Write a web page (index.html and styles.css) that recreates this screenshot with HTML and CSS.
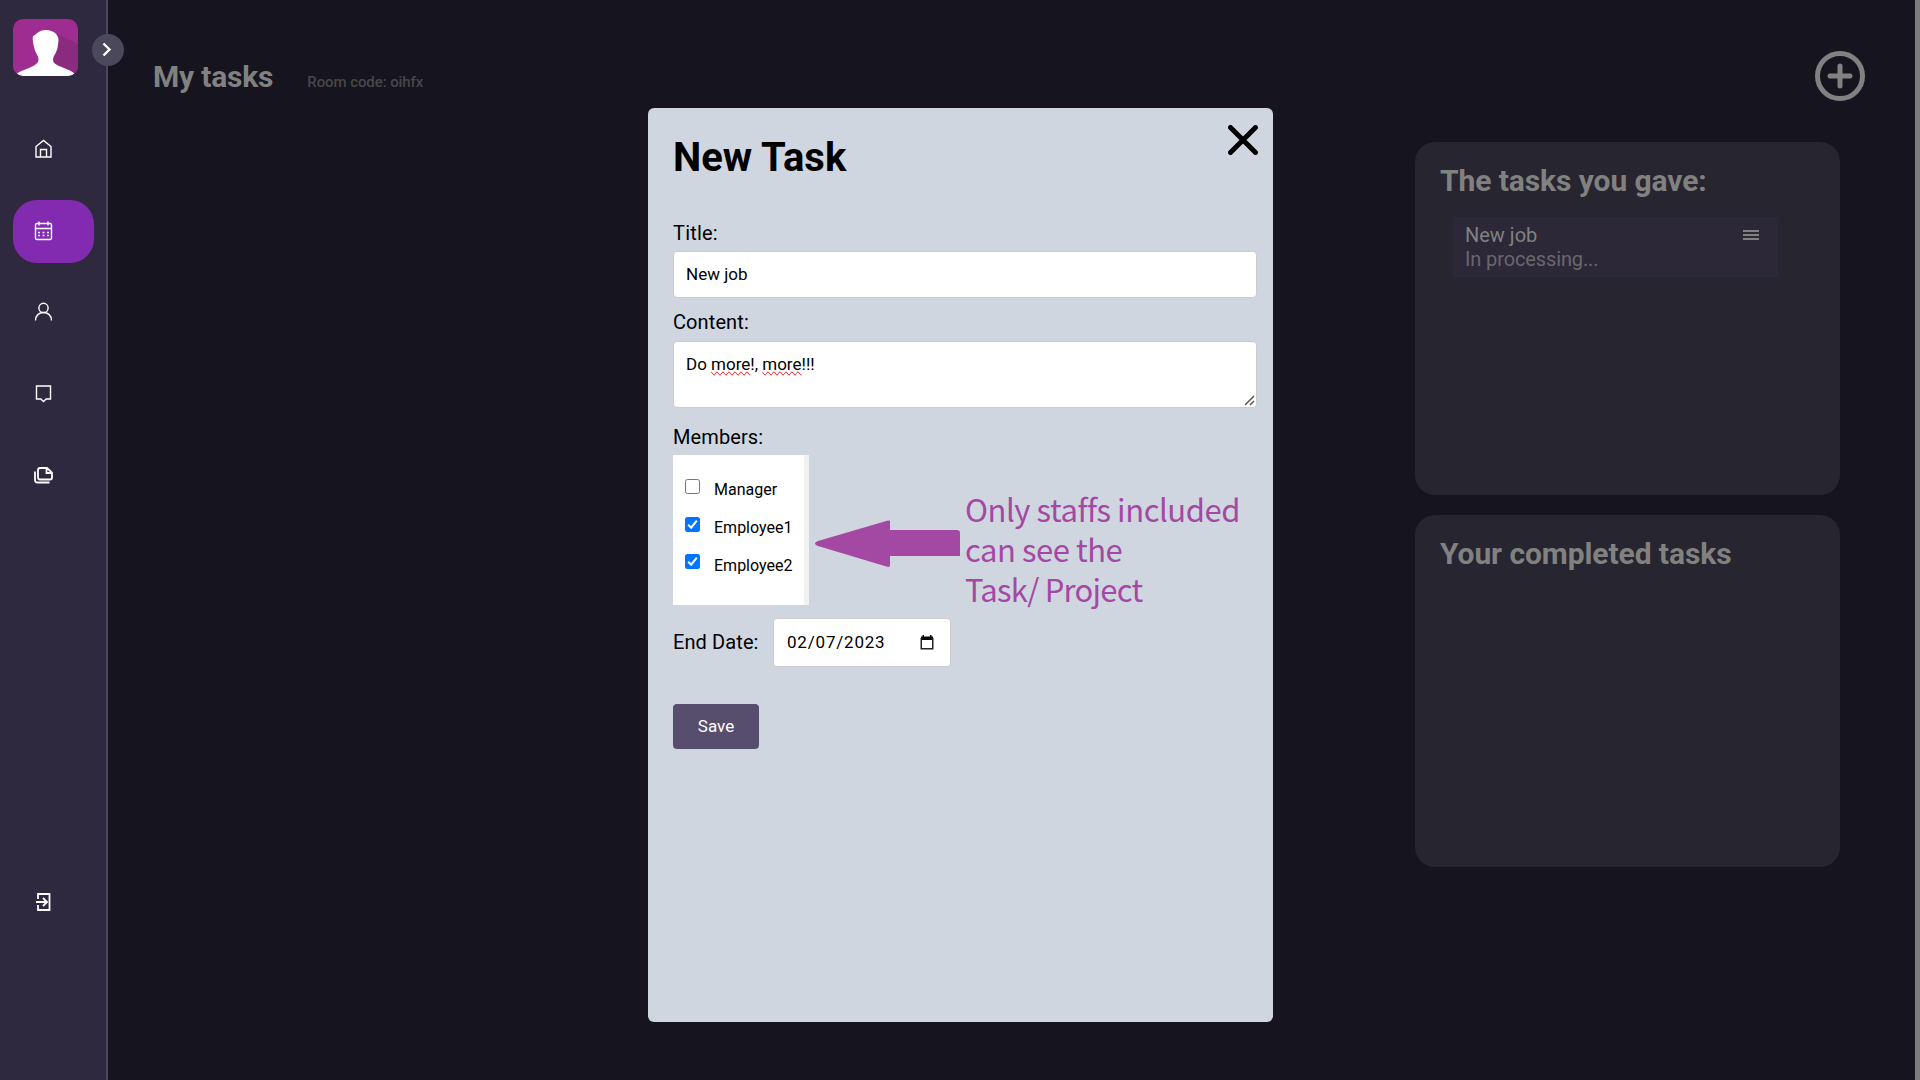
FILE: index.html
```html
<!DOCTYPE html>
<html lang="en">
<head>
<meta charset="utf-8">
<title>My tasks</title>
<link rel="stylesheet" href="styles.css">
</head>
<body>
<div class="app">
  <aside class="sidebar">
    <svg class="avatar" viewBox="0 0 65 57"><path fill="#9e2c91" d="M0 0h65v57H0z"/><path fill="#8b2b80" d="M44 15l21 10v32H40z"/><path fill="#fff" d="M20 17C23 16 25 11 33 11C41 11 46 16 45.500 22L44.500 29C43 35 40 37 40 41C40 47 53 48 61.500 54.500Q60 57 57 57H9Q6 57 4 54.500C13 49 25.500 47 25.500 41C26 37 22 34 21 28Q19 20 20 17z"/></svg>
    <nav class="nav">
      <a class="nav-item home"><svg viewBox="0 0 20 20"><path d="M2.500 7.500L10 1.500l7.500 6V18h-15zM7 18v-7.500h6V18"/></svg></a>
      <a class="nav-item active"><svg viewBox="0 0 20 20"><rect x="2" y="2.500" width="16" height="16" rx="1.500"/><path d="M2 7.500h16M5.500 0.500v4M14.500 0.500v4"/><path d="M4.500 11.500h2M9 11.500h2M13.500 11.500h2M4.500 14.500h2M9 14.500h2M13.500 14.500h2"/></svg></a>
      <a class="nav-item person"><svg viewBox="0 0 20 20"><circle cx="10" cy="5.900" r="4.600"/><path d="M2 18.500c0-5 3.500-8 8-8s8 3 8 8"/></svg></a>
      <a class="nav-item"><svg viewBox="0 0 20 20"><path d="M3 2h14v13h-4.300L10 17.500 7.300 15H3z"/></svg></a>
      <a class="nav-item files"><svg class="bold" viewBox="0 0 20 20"><path d="M6.500 3h7l5 4.700v4.800q0 2-2 2h-10q-2 0-2-2V5q0-2 2-2zM13 3.500V8h5"/><path d="M1.500 6.500v8.500q0 2.500 2.500 2.500h12"/></svg></a>
      <a class="nav-item logout"><svg class="bold" viewBox="0 0 20 20"><path d="M4.500 7V2h11.500v16H4.500v-5M2.500 10h11M9.500 6l4 4-4 4"/></svg></a>
    </nav>
    <button class="toggle"><svg viewBox="0 0 32 32"><path d="M11.500 9.500l6 6-6 6"/></svg></button>
  </aside>
  <main class="main">
    <header class="header">
      <h1 class="page-title">My tasks</h1>
      <span class="room">Room code: oihfx</span>
      <svg class="add" viewBox="0 0 50 50"><circle cx="25" cy="25" r="22.500"/><path d="M15 25h20M25 15v20"/></svg>
    </header>
    <div class="cards">
      <section class="card">
        <h2>The tasks you gave:</h2>
        <div class="job">
          <div><p class="job-name">New job</p><p class="job-state">In processing...</p></div>
          <svg class="menu" viewBox="0 0 16 10"><path d="M0 1h16M0 5h16M0 9h16"/></svg>
        </div>
      </section>
      <section class="card done"><h2>Your completed tasks</h2></section>
    </div>
  </main>
  <div class="scrollbar"></div>
</div>
<div class="modal">
  <svg class="close" viewBox="0 0 30 30"><path d="M2.500 2.500l25 25M27.500 2.500l-25 25"/></svg>
  <h2 class="modal-title">New Task</h2>
  <p class="label">Title:</p>
  <div class="field title-field">New job</div>
  <p class="label content-label">Content:</p>
  <div class="field area">Do <span class="typo">more</span>!, <span class="typo">more</span>!!!<svg class="grip" viewBox="0 0 11 11"><path d="M1 10L10 1M6 10l4-4"/></svg></div>
  <p class="label members-label">Members:</p>
  <div class="members">
    <div class="member"><span class="box"></span><span>Manager</span></div>
    <div class="member"><span class="box on"><svg viewBox="0 0 15 15"><path d="M3.200 7.700l3 3 5.600-7"/></svg></span><span>Employee1</span></div>
    <div class="member"><span class="box on"><svg viewBox="0 0 15 15"><path d="M3.200 7.700l3 3 5.600-7"/></svg></span><span>Employee2</span></div>
  </div>
  <div class="date-row">
    <span class="label date-label">End Date:</span>
    <div class="field date"><span>02/07/2023</span><svg viewBox="0 0 14 15"><path fill="#000" d="M1 1.500h1.500V0H4v1.500h6V0h1.500v1.500H13V5H1z"/><path fill="none" stroke="#222" stroke-width="1.500" d="M1.250 3v10.750h11.500V3"/></svg></div>
  </div>
  <button class="save">Save</button>
  <svg class="arrow" viewBox="0 0 145 48"><path d="M0 23.500Q0 22 3 21L73 0.500Q75 0 75 1.500V10h67q3 0 3 3v23H75v9q0 2.500-2 2L3 26Q0 25 0 23.500z"/></svg>
  <div class="note"><p>Only staffs included</p><p>can see the</p><p class="note-last">Task/ Project</p></div>
</div>
</body>
</html>
```
FILE: styles.css
```css
* { box-sizing: border-box; margin: 0; padding: 0; }
body { width: 1920px; height: 1080px; overflow: hidden; background: #16141e; font-family: Roboto, "Liberation Sans", sans-serif; color: #000; }
svg { display: block; }
button { border: 0; font: inherit; }
.app { display: flex; height: 1080px; }
.sidebar { position: relative; width: 108px; border-right: 2px solid #4b485a; background: #2e293f; padding: 19px 12px 0 13px; }
.avatar { width: 65px; height: 57px; border-radius: 10px; overflow: hidden; }
.nav { display: flex; flex-direction: column; gap: 18.500px; padding-top: 42px; }
.nav-item { display: flex; align-items: center; height: 63px; padding-left: 20px; border-radius: 24px; }
.nav-item svg { width: 21px; height: 20px; fill: none; stroke: #fff; stroke-width: 1.400; }
.nav-item svg.bold { stroke-width: 1.800; }
.home, .person, .files { padding-bottom: 2px; }
.active { background: #822bb1; }
.logout { margin-top: 345px; }
.toggle { position: absolute; left: 92px; top: 34px; width: 32px; height: 32px; border-radius: 50%; background: #4b485b; }
.toggle svg { width: 32px; fill: none; stroke: #fff; stroke-width: 2.400; }
.main { flex: 1; padding: 51px 75px 0 45px; }
.header { display: flex; height: 50px; align-items: baseline; }
.page-title { font-size: 30px; line-height: 52px; letter-spacing: -0.200px; color: #818181; }
.room { margin-left: 34px; font-size: 15px; font-weight: 500; letter-spacing: -0.080px; color: #48474b; }
.add { width: 50px; height: 50px; margin: 0 -25px 0 auto; align-self: flex-start; fill: none; stroke: #818181; stroke-width: 5; stroke-linecap: round; }
.cards { display: flex; flex-direction: column; align-items: flex-end; gap: 20px; padding-top: 41px; }
.card { width: 425px; height: 353px; border-radius: 20px; background: #27252f; padding: 21px 62px 0 25px; color: #818181; }
.done { height: 352px; }
.card h2 { font-size: 30px; line-height: 36px; letter-spacing: -0.080px; white-space: nowrap; }
.job { display: flex; justify-content: space-between; width: 325px; height: 60px; margin: 18px 0 0 13px; padding: 6px 19px 0 12px; background: #2c2838; font-size: 20px; line-height: 24px; }
.job-state { color: #69676d; letter-spacing: -0.120px; }
.menu { width: 16px; height: 10px; margin-top: 7px; stroke: #818181; stroke-width: 2; }
.scrollbar { width: 5px; background: #7d7d7d; }
.modal { position: absolute; left: 648px; top: 108px; width: 625px; height: 914px; border-radius: 6px; background: #d0d6e0; padding: 26px 16px 0 25px; }
.close { position: absolute; right: 15px; top: 17px; width: 30px; height: 30px; stroke: #000; stroke-width: 5; stroke-linecap: round; }
.modal-title { font-size: 40px; line-height: 48px; }
.label { font-size: 20px; line-height: 24px; }
.modal-title + .label { margin-top: 39px; letter-spacing: 0.200px; }
.field { border: 1px solid #ccc; border-radius: 4px; background: #fff; font-size: 17px; line-height: 20px; }
.title-field { height: 47px; margin-top: 6px; padding: 12px 12px; }
.content-label { margin-top: 12px; letter-spacing: 0.100px; }
.area { position: relative; height: 67px; margin-top: 7px; padding: 12px 12px; }
.typo { text-decoration: underline wavy #f22 1px; text-decoration-line: spelling-error; }
.grip { position: absolute; right: 1px; bottom: 1px; width: 11px; height: 11px; stroke: #555; stroke-width: 1.500; }
.members-label { margin-top: 17px; letter-spacing: 0.100px; }
.members { width: 136px; height: 150px; margin-top: 6px; padding: 24px 0 0 12px; border-right: 5px solid #f1f1f1; background: #fff; font-size: 16px; line-height: 20px; }
.member { display: flex; gap: 14px; height: 37.600px; }
.member span:last-child { padding-top: 1.400px; }
.box { width: 15px; height: 15px; flex: none; border: 1px solid #767676; border-radius: 2.500px; background: #fff; }
.on { border: 0; background: #0075ff; }
.on svg { fill: none; stroke: #fff; stroke-width: 2; }
.date-row { display: flex; align-items: center; height: 49px; margin-top: 13px; }
.date-label { width: 100px; padding-bottom: 2px; letter-spacing: 0.100px; }
.date { display: flex; justify-content: space-between; align-items: center; width: 178px; height: 49px; padding: 0 16px 0 13px; }
.date span { padding-bottom: 2px; letter-spacing: 0.800px; }
.date svg { width: 14px; height: 15px; }
.save { width: 86px; height: 45px; margin-top: 37px; padding-bottom: 2px; border-radius: 4px; background: #574e6e; color: #fff; font-size: 17px; }
.arrow { position: absolute; left: 167px; top: 412px; width: 145px; height: 48px; fill: #a349a4; }
.note { position: absolute; left: 317px; top: 381px; color: #a349a4; font-family: "Noto Sans CJK SC", sans-serif; font-size: 31px; line-height: 40px; letter-spacing: -0.450px; white-space: nowrap; }
.note-last { letter-spacing: -0.750px; }
```
